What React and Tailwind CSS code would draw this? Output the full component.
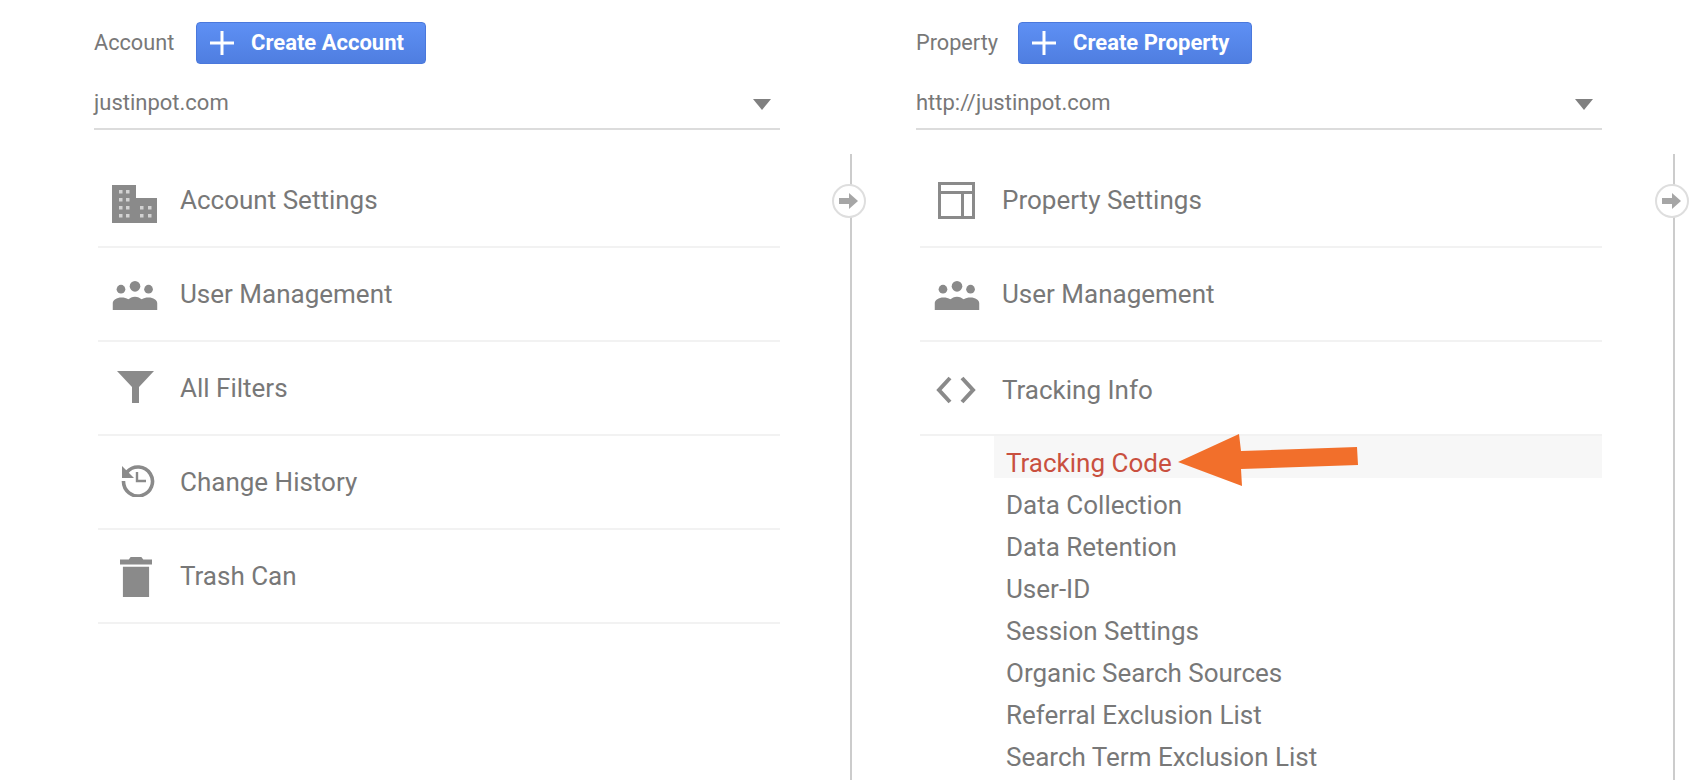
import { Fragment } from 'react'

const ICON_FILL = '#8a8a8a'

function BuildingIcon() {
  return (
    <svg width="45" height="38" viewBox="0 0 45 38" className="mt-[7px] mr-[1px]">
      <path fill={ICON_FILL} d="M0 0h24v13h21v25H0z" />
      <g fill="#d2d2d2">
        {[5, 13, 21, 29].map((y) => (
          <Fragment key={y}>
            <rect x="7" y={y} width="3.5" height="3.5" />
            <rect x="14" y={y} width="3.5" height="3.5" />
          </Fragment>
        ))}
        {[21, 29].map((y) => (
          <Fragment key={y}>
            <rect x="28" y={y} width="3.5" height="3.5" />
            <rect x="36" y={y} width="3.5" height="3.5" />
          </Fragment>
        ))}
      </g>
    </svg>
  )
}

function PeopleIcon() {
  return (
    <svg width="46" height="29" viewBox="0 0 46 30" className="mt-[2px]">
      <g fill={ICON_FILL}>
        <circle cx="8.500" cy="8.500" r="4.500" />
        <circle cx="23" cy="5.500" r="5.500" />
        <circle cx="37" cy="8.500" r="4.500" />
        <path d="M0 30v-7c0-3.500 4-6 9-6 3 0 5 .6 7 2 2-1.600 4-2.800 7-2.800s5 1.200 7 2.800c2-1.400 4-2 7-2 5 0 9 2.500 9 6v7z" />
      </g>
    </svg>
  )
}

function FunnelIcon() {
  return (
    <svg width="37" height="32" viewBox="0 0 37 32" className="mb-[3px]">
      <path fill={ICON_FILL} d="M0 0h37L22 16v16h-7V16z" />
    </svg>
  )
}

function HistoryIcon() {
  return (
    <svg width="34" height="34" viewBox="0 0 34 34" className="ml-[6px] mb-[4px]">
      <path
        fill="none"
        stroke={ICON_FILL}
        strokeWidth="3.600"
        d="M6 9A14.500 14.500 0 1 1 2.500 18"
      />
      <path fill={ICON_FILL} d="M1 3v12h12z" />
      <path fill="none" stroke={ICON_FILL} strokeWidth="2.400" d="M16 9v9h9" />
    </svg>
  )
}

function TrashIcon() {
  return (
    <svg width="32" height="40" viewBox="0 0 33 41" className="ml-[2px] mt-[2px]">
      <path
        fill={ICON_FILL}
        d="M11 0h11l2 2.500h9v5H0v-5h9zM3 10h27v31H3z"
      />
    </svg>
  )
}

function LayoutIcon() {
  return (
    <svg width="37" height="37" viewBox="0 0 37 37" className="mr-[2px]">
      <path
        fill="none"
        stroke={ICON_FILL}
        strokeWidth="3"
        d="M1.500 1.500h34v34h-34zM1.500 10.500h34M24.500 10.500v25"
      />
    </svg>
  )
}

function CodeIcon() {
  return (
    <svg width="40" height="28" viewBox="0 0 40 28" className="mr-[2px]">
      <path
        fill="none"
        stroke={ICON_FILL}
        strokeWidth="4"
        d="M14 2 3 14l11 12M26 2l11 12-11 12"
      />
    </svg>
  )
}

function PlusIcon() {
  return (
    <svg width="24" height="24" viewBox="0 0 24 24" className="shrink-0">
      <path fill="none" stroke="#fff" strokeWidth="3" d="M12 0v24M0 12h24" />
    </svg>
  )
}

function Panel({ label, buttonLabel, buttonClass, selected, children }) {
  return (
    <div className="w-[686px] shrink-0">
      <div className="flex items-center h-[42px] mt-[22px]">
        <span className="text-[21.7px] w-[102px] shrink-0">{label}</span>
        <button className={`flex items-center h-[42px] rounded-[4px] border border-[#4a78dc] bg-gradient-to-b from-[#5e90f4] to-[#4f7ee0] text-white font-bold text-[22px] pl-[13px] ${buttonClass}`}>
          <PlusIcon />
          <span className="ml-[17px] pb-[2px] whitespace-nowrap">{buttonLabel}</span>
        </button>
      </div>
      <div className="flex items-center justify-between h-[48px] pb-[6px] mt-[18px] border-b-2 border-[#dcdcdc]">
        <span className="text-[22px]">{selected}</span>
        <span className="w-0 h-0 border-x-[9px] border-x-transparent border-t-[11px] border-t-[#808080] mr-[9px] mt-[4px]" />
      </div>
      <div className="mt-[24px]">{children}</div>
    </div>
  )
}

function MenuRow({ icon, text, rowClass = '' }) {
  return (
    <div className={`flex items-center h-[94px] ml-[4px] border-b-2 border-[#f2f2f2] ${rowClass}`}>
      <div className="w-[82px] shrink-0 flex justify-center pr-[8px]">{icon}</div>
      <span className="text-[26px]">{text}</span>
    </div>
  )
}

function Connector({ lineClass }) {
  return (
    <div className={`relative shrink-0 mt-[154px] ${lineClass}`}>
      <div className="w-[2px] h-full bg-[#cccccc]" />
      <div className="absolute left-[-18px] top-[30px] w-[34px] h-[34px] rounded-full bg-white border-2 border-[#dedede] flex items-center justify-center">
        <svg width="20" height="16" viewBox="0 0 20 16">
          <path fill="#a6a6a6" d="M0 5h10V0l9 8-9 8v-5H0z" />
        </svg>
      </div>
    </div>
  )
}

const trackingItems = [
  'Data Collection',
  'Data Retention',
  'User-ID',
  'Session Settings',
  'Organic Search Sources',
  'Referral Exclusion List',
  'Search Term Exclusion List',
]

export default function App() {
  return (
    <div className="relative h-[780px] w-[1692px] overflow-hidden bg-white flex pl-[94px] text-[#787878] font-['Roboto',sans-serif]">
      <Panel label="Account" buttonLabel="Create Account" buttonClass="w-[230px]" selected="justinpot.com">
        <MenuRow icon={<BuildingIcon />} text="Account Settings" />
        <MenuRow icon={<PeopleIcon />} text="User Management" />
        <MenuRow icon={<FunnelIcon />} text="All Filters" />
        <MenuRow icon={<HistoryIcon />} text="Change History" />
        <MenuRow icon={<TrashIcon />} text="Trash Can" />
      </Panel>

      <Connector lineClass="ml-[70px] mr-[64px]" />

      <Panel label="Property" buttonLabel="Create Property" buttonClass="w-[234px]" selected="http://justinpot.com">
        <MenuRow icon={<LayoutIcon />} text="Property Settings" />
        <MenuRow icon={<PeopleIcon />} text="User Management" />
        <MenuRow icon={<CodeIcon />} text="Tracking Info" rowClass="pt-[4px]" />
        <div className="ml-[78px]">
          <div className="h-[42px] pt-[13px] leading-[29px] pl-[12px] bg-[#f7f7f7] text-[#c9503f] text-[26px]">Tracking Code</div>
          {trackingItems.map((item) => (
            <div key={item} className="h-[42px] pt-[13px] leading-[29px] pl-[12px] text-[26px]">{item}</div>
          ))}
        </div>
      </Panel>

      <Connector lineClass="ml-[71px]" />

      {/* annotation arrow drawn over the screenshot */}
      <svg className="absolute left-[1170px] top-[425px]" width="200" height="70" viewBox="0 0 200 70">
        <polygon fill="#f26f2b" points="8,37 69,9 71,26 187,22 188,40 71,44 72,61" />
      </svg>
    </div>
  )
}
